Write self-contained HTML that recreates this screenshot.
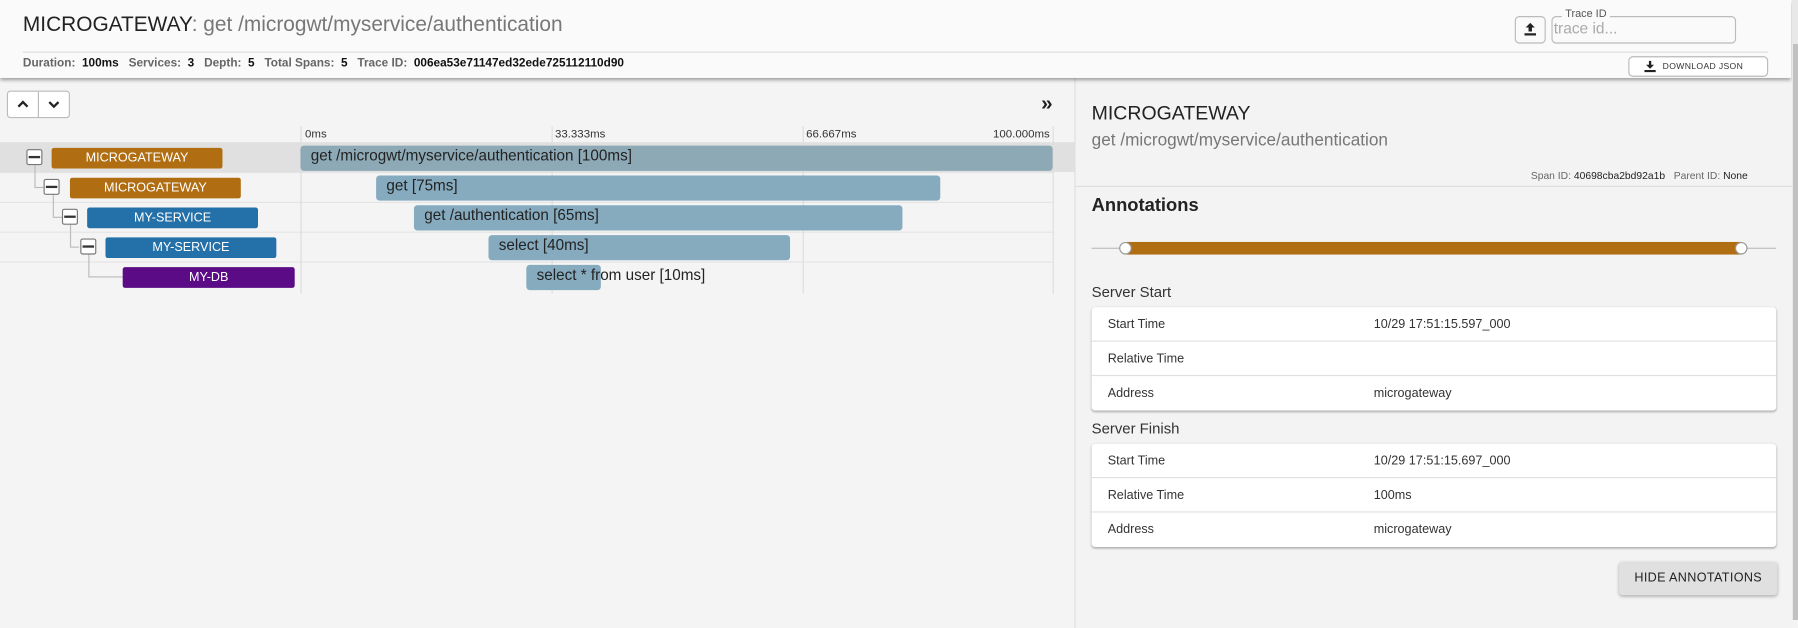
<!DOCTYPE html>
<html><head><meta charset="utf-8"><style>
*{box-sizing:border-box;margin:0;padding:0}
html,body{width:1798px;height:620px;overflow:hidden;background:#f4f4f4}
#w{position:absolute;left:0;top:0;width:1568px;height:541px;transform:scale(1.14668);transform-origin:0 0;font-family:"Liberation Sans",sans-serif;color:#222;background:#f4f4f4}
.a{position:absolute}
.hdr{left:0;top:0;width:1562px;height:68px;background:#fafafa;box-shadow:0 2px 3px rgba(0,0,0,.35);z-index:2}
.lbl{position:absolute;height:18px;border-radius:2px;color:#fff;font-size:11px;text-align:center;line-height:18px}
.bar{position:absolute;height:22px;border-radius:3px;background:#86abbf;font-size:13.3px;color:#222;padding-left:9px;line-height:18px}
.tg{position:absolute;width:14px;height:14px;border:1px solid #777;border-radius:2px;background:#fff}
.tg:after{content:"";position:absolute;left:1px;right:1px;top:5px;height:2px;background:#333}
.tick{position:absolute;top:110px;width:1px;height:146px;background:#ddd}
.tl{position:absolute;top:112px;font-size:10px;color:#333}
.rowline{position:absolute;left:0;width:918px;height:1px;background:#e4e4e4}
.card{position:absolute;left:952px;width:597px;background:#fff;border-radius:3px;box-shadow:0 1px 2px rgba(0,0,0,.3)}
.card div{height:30px;border-bottom:1px solid #e0e0e0;font-size:11px;line-height:30px;position:relative;padding-left:14px;color:#333}
.card div:last-child{border-bottom:none}
.card span{position:absolute;left:246px}
</style></head><body>
<div id="w">
<div class="a hdr">
  <div class="a" style="left:20px;top:11px;font-size:18.2px;color:#222">MICROGATEWAY<span style="color:#777">: get /microgwt/myservice/authentication</span></div>
  <div class="a" style="left:20px;top:45px;width:1522px;height:1px;background:#ddd"></div>
  <div class="a" style="left:20px;top:50px;font-size:10.3px;font-weight:bold;color:#666;white-space:nowrap">Duration:&nbsp; <b style="color:#111">100ms</b>&nbsp;&nbsp; Services:&nbsp; <b style="color:#111">3</b>&nbsp;&nbsp; Depth:&nbsp; <b style="color:#111">5</b>&nbsp;&nbsp; Total Spans:&nbsp; <b style="color:#111">5</b>&nbsp;&nbsp; Trace ID:&nbsp; <b style="color:#111">006ea53e71147ed32ede725112110d90</b></div>
  <div class="a" style="left:1321px;top:14px;width:27px;height:24px;border:1px solid #bbb;border-radius:4px;background:#fafafa"><svg width="25" height="22" viewBox="0 0 25 22"><path d="M12.5 5l-4 4h2.5v3.5h3V9h2.5z M7.5 14h10v2h-10z" fill="#222"/></svg></div>
  <div class="a" style="left:1353px;top:14px;width:161px;height:24px;border:1px solid #bbb;border-radius:4px"></div>
  <div class="a" style="left:1362px;top:7px;padding:0 3px;background:#fafafa;font-size:9.5px;color:#555">Trace ID</div>
  <div class="a" style="left:1355px;top:17px;font-size:13.5px;color:#aaa">trace id...</div>
  <div class="a" style="left:1420px;top:49px;width:122px;height:18px;border:1px solid #bbb;border-radius:4px;background:#fff;font-size:7.5px;color:#333;letter-spacing:.3px;line-height:16px;padding-left:29px">DOWNLOAD JSON<svg class="a" style="left:13px;top:3px" width="10" height="10" viewBox="0 0 10 10"><path d="M5 7L1.5 3.5H4V0h2v3.5h2.5z M0 8h10v2H0z" fill="#222"/></svg></div>
</div>
<!-- left pane -->
<div class="a" style="left:6px;top:79px;width:55px;height:24px;border:1px solid #bbb;border-radius:3px;background:#fff"></div>
<div class="a" style="left:33px;top:80px;width:1px;height:22px;background:#bbb"></div>
<svg class="a" style="left:14px;top:86px" width="12" height="10"><path d="M2 7l4-4 4 4" stroke="#222" stroke-width="2" fill="none"/></svg>
<svg class="a" style="left:41px;top:86px" width="12" height="10"><path d="M2 3l4 4 4-4" stroke="#222" stroke-width="2" fill="none"/></svg>
<div class="a" style="left:908px;top:80px;font-size:18px;font-weight:bold;color:#222">»</div>
<div class="a" style="left:0;top:124px;width:937px;height:26px;background:#e0e0e0"></div>
<div class="rowline" style="top:150px"></div><div class="rowline" style="top:176px"></div><div class="rowline" style="top:202px"></div><div class="rowline" style="top:228px"></div>
<div class="tick" style="left:262px"></div><div class="tick" style="left:481px"></div><div class="tick" style="left:700px"></div><div class="tick" style="left:918px"></div>
<div class="tl" style="left:266px">0ms</div><div class="tl" style="left:484px">33.333ms</div><div class="tl" style="left:703px">66.667ms</div><div class="tl" style="left:866px">100.000ms</div>
<div class="a" style="left:30px;top:144px;width:1px;height:19px;background:#bbb"></div>
<div class="a" style="left:30px;top:163px;width:8px;height:1px;background:#bbb"></div>
<div class="a" style="left:46px;top:170px;width:1px;height:19px;background:#bbb"></div>
<div class="a" style="left:46px;top:189px;width:8px;height:1px;background:#bbb"></div>
<div class="a" style="left:61px;top:196px;width:1px;height:19px;background:#bbb"></div>
<div class="a" style="left:61px;top:215px;width:8px;height:1px;background:#bbb"></div>
<div class="a" style="left:77px;top:222px;width:1px;height:19px;background:#bbb"></div>
<div class="a" style="left:77px;top:241px;width:30px;height:1px;background:#bbb"></div>
<div class="tg" style="left:23px;top:130px"></div>
<div class="tg" style="left:38px;top:156px"></div>
<div class="tg" style="left:54px;top:182px"></div>
<div class="tg" style="left:70px;top:208px"></div>
<div class="lbl" style="left:45px;top:129px;width:149px;background:#b06d12">MICROGATEWAY</div>
<div class="lbl" style="left:61px;top:155px;width:149px;background:#b06d12">MICROGATEWAY</div>
<div class="lbl" style="left:76px;top:181px;width:149px;background:#2470a8">MY-SERVICE</div>
<div class="lbl" style="left:92px;top:207px;width:149px;background:#2470a8">MY-SERVICE</div>
<div class="lbl" style="left:107px;top:233px;width:150px;background:#5a0b85">MY-DB</div>
<div class="bar" style="left:262px;top:127px;width:656px;background:#8da9b6">get /microgwt/myservice/authentication [100ms]</div>
<div class="bar" style="left:328px;top:153px;width:492px">get [75ms]</div>
<div class="bar" style="left:361px;top:179px;width:426px">get /authentication [65ms]</div>
<div class="bar" style="left:426px;top:205px;width:263px">select [40ms]</div>
<div class="bar" style="left:459px;top:231px;width:65px;white-space:nowrap;overflow:visible">select * from user [10ms]</div>
<!-- right pane -->
<div class="a" style="left:937px;top:68px;width:1px;height:480px;background:#ddd"></div>
<div class="a" style="left:938px;top:68px;width:626px;height:480px;background:#f3f3f3"></div>
<div class="a" style="left:952px;top:89px;font-size:17px;color:#222">MICROGATEWAY</div>
<div class="a" style="left:952px;top:114px;font-size:15px;color:#777">get /microgwt/myservice/authentication</div>
<div class="a" style="left:1335px;top:148px;font-size:9px;color:#666;white-space:nowrap">Span ID: <span style="color:#222">40698cba2bd92a1b</span>&nbsp;&nbsp; Parent ID: <span style="color:#222">None</span></div>
<div class="a" style="left:938px;top:162px;width:626px;height:1px;background:#ddd"></div>
<div class="a" style="left:952px;top:171px;font-size:16px;font-weight:bold;color:#222">Annotations</div>
<div class="a" style="left:952px;top:216px;width:597px;height:1px;background:#bbb"></div>
<div class="a" style="left:982px;top:211px;width:537px;height:11px;background:#b06d12"></div>
<div class="a" style="left:976px;top:211px;width:11px;height:11px;border-radius:50%;background:#fff;border:1px solid #999"></div>
<div class="a" style="left:1513px;top:211px;width:11px;height:11px;border-radius:50%;background:#fff;border:1px solid #999"></div>
<div class="a" style="left:952px;top:247px;font-size:13px;color:#333">Server Start</div>
<div class="card" style="top:268px"><div>Start Time<span>10/29 17:51:15.597_000</span></div><div>Relative Time<span></span></div><div>Address<span>microgateway</span></div></div>
<div class="a" style="left:952px;top:366px;font-size:13px;color:#333">Server Finish</div>
<div class="card" style="top:387px"><div>Start Time<span>10/29 17:51:15.697_000</span></div><div>Relative Time<span>100ms</span></div><div>Address<span>microgateway</span></div></div>
<div class="a" style="left:1412px;top:490px;width:138px;height:29px;background:#e0e0e0;border-radius:3px;box-shadow:0 1px 3px rgba(0,0,0,.3);font-size:11px;color:#222;text-align:center;line-height:29px;letter-spacing:.3px">HIDE ANNOTATIONS</div>
</div>
<div style="position:absolute;left:1792px;top:0;width:6px;height:620px;background:#e8e8e8"></div>
<div style="position:absolute;left:1793px;top:44px;width:5px;height:576px;background:#c1c1c1"></div>
</body></html>
